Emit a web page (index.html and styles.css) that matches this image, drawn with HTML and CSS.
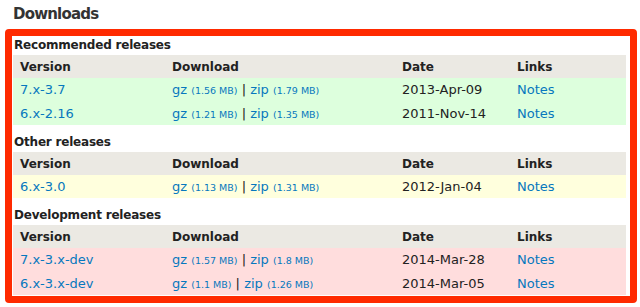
FILE: index.html
```html
<!DOCTYPE html>
<html>
<head>
<meta charset="utf-8">
<link rel="stylesheet" href="styles.css">
</head>
<body>
<h2 class="title">Downloads</h2>
<div class="box">
  <h3 class="group">Recommended releases</h3>
  <table class="rel">
    <colgroup><col class="c1"><col class="c2"><col class="c3"><col class="c4"></colgroup>
    <thead><tr><th>Version</th><th>Download</th><th>Date</th><th>Links</th></tr></thead>
    <tbody class="ok">
      <tr><td><a href="#">7.x-3.7</a></td><td><a href="#">gz</a> <span class="sz">(1.56 MB)</span> | <a href="#">zip</a> <span class="sz">(1.79 MB)</span></td><td>2013-Apr-09</td><td><a href="#">Notes</a></td></tr>
      <tr><td><a href="#">6.x-2.16</a></td><td><a href="#">gz</a> <span class="sz">(1.21 MB)</span> | <a href="#">zip</a> <span class="sz">(1.35 MB)</span></td><td>2011-Nov-14</td><td><a href="#">Notes</a></td></tr>
    </tbody>
  </table>
  <h3 class="group">Other releases</h3>
  <table class="rel">
    <colgroup><col class="c1"><col class="c2"><col class="c3"><col class="c4"></colgroup>
    <thead><tr><th>Version</th><th>Download</th><th>Date</th><th>Links</th></tr></thead>
    <tbody class="warn">
      <tr><td><a href="#">6.x-3.0</a></td><td><a href="#">gz</a> <span class="sz">(1.13 MB)</span> | <a href="#">zip</a> <span class="sz">(1.31 MB)</span></td><td>2012-Jan-04</td><td><a href="#">Notes</a></td></tr>
    </tbody>
  </table>
  <h3 class="group">Development releases</h3>
  <table class="rel last">
    <colgroup><col class="c1"><col class="c2"><col class="c3"><col class="c4"></colgroup>
    <thead><tr><th>Version</th><th>Download</th><th>Date</th><th>Links</th></tr></thead>
    <tbody class="err">
      <tr><td><a href="#">7.x-3.x-dev</a></td><td><a href="#">gz</a> <span class="sz">(1.57 MB)</span> | <a href="#">zip</a> <span class="sz">(1.8 MB)</span></td><td>2014-Mar-28</td><td><a href="#">Notes</a></td></tr>
      <tr><td><a href="#">6.x-3.x-dev</a></td><td><a href="#">gz</a> <span class="sz">(1.1 MB)</span> | <a href="#">zip</a> <span class="sz">(1.26 MB)</span></td><td>2014-Mar-05</td><td><a href="#">Notes</a></td></tr>
    </tbody>
  </table>
</div>
</body>
</html>
```
FILE: styles.css
```css
html, body {
  margin: 0;
  padding: 0;
  background: #fff;
}
body {
  font-family: "DejaVu Sans", "Liberation Sans", sans-serif;
  color: #222;
  font-size: 13px;
}
.title {
  margin: 0;
  padding: 4px 0 0 13px;
  height: 25px;
  font-size: 15px;
  letter-spacing: -0.8px;
  line-height: 20px;
  font-weight: bold;
  color: #333;
}
.box {
  margin-left: 5px;
  width: 616px;
  border: 7px solid #ff2a00;
  border-radius: 4px;
  padding: 0 1px 1px 1px;
}
.group {
  margin: 0;
  font-size: 12px;
  letter-spacing: -0.2px;
  font-weight: bold;
  line-height: 19px;
  height: 19px;
  padding-left: 1px;
  color: #222;
}
.rel {
  border-collapse: collapse;
  width: 613px;
  table-layout: fixed;
  margin-bottom: 8px;
}
.rel.last { margin-bottom: 0; }
.c1 { width: 152px; }
.c2 { width: 230px; }
.c3 { width: 115px; }
.c4 { width: 116px; }
.rel th {
  background: #ebe9e3;
  text-align: left;
  font-weight: bold;
  height: 23px;
  padding: 0 0 0 7px;
  font-size: 12px;
  color: #222;
}
.rel td {
  height: 23px;
  padding: 0 0 0 7px;
  white-space: nowrap;
  font-size: 13px;
  color: #222;
}
.rel tbody tr + tr td { height: 24px; }
.ok td { background: #dfd; }
.warn td { background: #ffd; }
.err td { background: #fdd; }
a {
  color: #0678be;
  text-decoration: none;
}
.sz {
  font-size: 9.5px;
  color: #0678be;
}
```
